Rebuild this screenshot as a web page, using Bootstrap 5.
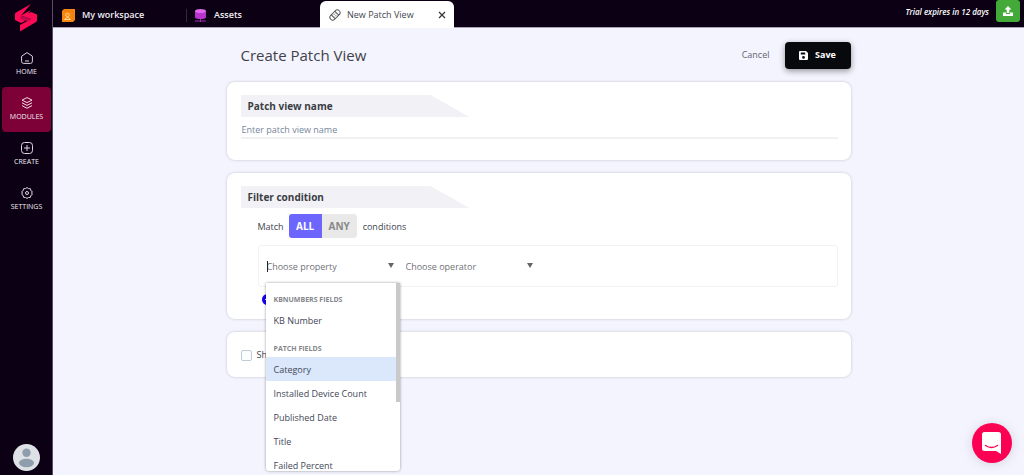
<!DOCTYPE html>
<html lang="en">
<head>
<meta charset="utf-8">
<meta name="viewport" content="width=device-width, initial-scale=1">
<title>Create Patch View</title>
<link href="https://cdn.jsdelivr.net/npm/bootstrap@5.3.0/dist/css/bootstrap.min.css" rel="stylesheet">
<style>
  body { font-family: "Open Sans", "Noto Sans", sans-serif; font-size: 9px; line-height: 16px; color: #41454e; background: #f4f4fe; }
  svg { display: block; flex: none; }
  .sidebar { width: 53px; background: #0b0014; border-right: 1px solid #564e62; }
  .sidebar .brand { height: 42px; padding-top: 4px; }
  .side-link { width: 49px; height: 45px; margin: 0 2px; border-radius: 4px; color: #f3eef4; font-size: 7px; font-weight: 400; line-height: 10px; gap: 3px; text-decoration: none; }
  .side-link.active { background: #7d0036; }
  .topbar { height: 28px; background: #0b0014; border-bottom: 1px solid #a9a3b8; color: #fff; }
  .tab-item { width: 133px; height: 28px; font-weight: 600; color: #f1eef3; text-decoration: none; gap: 7px; padding: 2px 8px 0 9px; }
  .tab-item + .tab-item::before { content: ""; width: 1px; height: 13px; background: #34283d; margin-left: -9px; }
  .tab-item.current { width: 134px; background: #fff; color: #44474f; font-weight: 400; border-radius: 6px 6px 0 0; margin: 1px 0 0 1px; height: 27px; gap: 6px; padding-top: 1px; }
  .tab-item.current::before { display: none; }
  .trial { font-size: 8px; font-style: italic; font-weight: 600; padding: 4px 7px 0 0; }
  .upload { width: 24px; height: 22px; background: #43a938; border: 0; border-radius: 3px; margin-right: 4px; }
  .page { max-width: 624px; width: 100%; }
  .page-head { height: 54px; padding-left: 14px; }
  .page-head h1 { font-size: 15px; line-height: 24px; font-weight: 400; color: #3f424a; }
  .btn-cancel { color: #62656e; border: 0; background: none; padding: 0 15px; }
  .btn-save { width: 66px; height: 27px; background: #08090d; color: #fff; font-weight: 700; border: 0; border-radius: 4px; box-shadow: 0 2px 6px #0006; gap: 7px; }
  .panel { background: #fff; border-radius: 8px; box-shadow: 0 0 3px #0003; padding: 13px 13px 14px 14px; margin-bottom: 13px; }
  .panel.name-panel { padding-bottom: 21px; }
  .ribbon { width: 229px; height: 22px; line-height: 22px; font-size: 10px; font-weight: 700; color: #3b3d44; background: #f2f1f6; padding-left: 7px; clip-path: polygon(0 0, 190px 0, 100% 100%, 0 100%); }
  .name-field { border: 0; border-bottom: 2px solid #f0f1f3; border-radius: 0; width: 100%; height: 22px; padding: 4px 1px 0; outline: 0; }
  .name-field::placeholder { color: #76869a; opacity: 1; }
  .inset { margin-left: 17px; }
  .match-row { padding-top: 6px; }
  .match-btn { height: 24px; border: 0; font-size: 10px; font-weight: 700; color: #888; background: #e9e9e9; border-radius: 0 3px 3px 0; width: 35px; padding: 0; }
  .match-btn.on { color: #fff; background: #6c66ff; border-radius: 3px 0 0 3px; width: 33px; margin-left: 5px; }
  .match-word { padding: 1px 0 0; }
  .match-btn + .match-word { margin-left: 6px; }
  .rule-row { height: 42px; border: 1px solid #f2f2f4; border-radius: 3px; padding: 0 8px; margin-top: 7px; gap: 12px; }
  .picker { width: 127px; }
  .picker input, .picker select { display: block; appearance: none; border: 0; outline: 0; width: 100%; height: 20px; padding: 1px 0 0; background: transparent; color: #6e7177; }
  .picker input::placeholder { color: #6e7177; opacity: 1; }
  .picker .arrow { position: absolute; right: 0; top: 7px; border: 3px solid transparent; border-top: 5px solid #62656b; border-bottom: 0; pointer-events: none; }
  .picker .caret-bar { position: absolute; left: 0; top: 5px; width: 1px; height: 11px; background: #222; }
  .add-btn { width: 11px; height: 11px; padding: 0; border: 0; background: none; margin: 7px 0 0 4px; }
  .option-menu { position: absolute; z-index: 5; left: -1px; top: 27px; width: 134px; height: 188px; overflow: hidden; background: #fff; border-radius: 0 0 3px 3px; box-shadow: 0 0 3px #0006; color: #3f4857; }
  .option-menu .thumb { position: absolute; right: 0; top: 0; width: 4px; height: 119px; background: #c9c9c9; }
  .option-menu ul { list-style: none; margin: 0; padding: 0; width: 130px; }
  .option-menu li { height: 24px; line-height: 25px; padding-left: 8px; white-space: nowrap; }
  .option-menu li.group { font-size: 7px; font-weight: 700; color: #85878c; height: 25px; line-height: 33px; }
  .option-menu li.hot { background: #dbe8fc; }
  .tick { width: 11px; height: 11px; margin: 0; border: 1px solid #bfcbd6; border-radius: 2px; appearance: none; background: #fbfdff; }
  .check-row { gap: 5px; padding-top: 2px; }
  .chat { position: fixed; right: 12px; bottom: 12px; width: 40px; height: 40px; border: 0; border-radius: 50%; background: #fc0053; padding: 0; box-shadow: 0 1px 12px #0002; }
</style>
</head>
<body>
<div class="d-flex min-vh-100">
  <nav class="sidebar d-flex flex-column flex-shrink-0" aria-label="Main">
    <a href="#" class="brand d-flex justify-content-center" aria-label="Home page">
      <svg width="24" height="28" viewBox="0 0 24 28"><path fill="#fc0a55" d="M17 0v6L7 11.500l10 3.500L6 21v6.500L22 18q1-.8 1-2v-5.500L17 8l-3 1.500 3-3.500V0L2 8.500Q1 9 1 10v6l6 3 4-2-4-5.500z"/><path fill="#c4084c" d="M7 11.500L17 15l-4 2.200-7-2.700z"/></svg>
    </a>
    <a href="#" class="side-link d-flex flex-column align-items-center justify-content-center">
      <svg width="12" height="12" viewBox="0 0 12 12" fill="none" stroke="#ddd5df"><path d="M.6 4.200L6 .6l5.400 3.600v5.200q0 2-2 2H2.600q-2 0-2-2zM4 9h4"/></svg>HOME</a>
    <a href="#" class="side-link active d-flex flex-column align-items-center justify-content-center">
      <svg width="12" height="12" viewBox="0 0 12 12" fill="none" stroke="#f1dbe6"><path d="M6 .6l5 2.500-5 2.500-5-2.500zM1 5.800l5 2.600 5-2.600M1 8.600l5 2.700 5-2.700"/></svg>MODULES</a>
    <a href="#" class="side-link d-flex flex-column align-items-center justify-content-center">
      <svg width="12" height="12" viewBox="0 0 12 12" fill="none" stroke="#ddd5df"><rect x=".5" y=".5" width="11" height="11" rx="3"/><path d="M6 3v6M3 6h6"/></svg>CREATE</a>
    <a href="#" class="side-link d-flex flex-column align-items-center justify-content-center">
      <svg width="12" height="12" viewBox="0 0 12 12" fill="none" stroke="#ddd5df"><path stroke-linejoin="round" d="M4.500 1.600L6 .6l1.500 1 1.900.1.400 1.900 1.500 1L10.700 6l.6 1.500-1.500 1-.4 1.900-1.900.1-1.500.9-1.500-.9-1.900-.1-.4-1.900-1.400-1L1.300 6 .7 4.600l1.500-1 .4-1.900z"/><circle cx="6" cy="6" r="1.500"/></svg>SETTINGS</a>
    <a href="#" class="mt-auto mx-auto mb-1" aria-label="Profile">
      <svg width="27" height="27" viewBox="0 0 27 27"><circle cx="13.500" cy="13.500" r="13.500" fill="#dee1e5"/><circle cx="13.500" cy="8.800" r="4.200" fill="#8f9dac"/><ellipse cx="13.500" cy="19" rx="7.500" ry="4.200" fill="#8f9dac"/></svg></a>
  </nav>

  <div class="flex-grow-1 d-flex flex-column">
    <header class="topbar d-flex">
      <a href="#" class="tab-item d-flex align-items-center">
        <svg width="13" height="13" viewBox="0 0 13 13"><path d="M2 0h11v11l-2 2H0V2z" fill="#f58610"/><path d="M2 2h9v9" fill="none" stroke="#e87408" stroke-width=".7"/><circle cx="5.500" cy="6" r="1.700" fill="none" stroke="#ffd08a"/><path d="M2.500 10.500q3-4 6 0z" fill="none" stroke="#ffd08a"/></svg>
        My workspace</a>
      <a href="#" class="tab-item d-flex align-items-center">
        <svg width="13" height="13" viewBox="0 0 13 13"><path d="M1 2v6q0 2 5.500 2T12 8V2z" fill="#b934cf"/><ellipse cx="6.500" cy="2" rx="5.500" ry="2" fill="#df67ea"/><path d="M1 12h11M6.500 10v3" stroke="#a32cb8"/></svg>
        Assets</a>
      <a href="#" class="tab-item current d-flex align-items-center">
        <svg width="12" height="12" viewBox="0 0 12 12" fill="none" stroke="#555"><g transform="rotate(-45 6 6)"><rect x="0" y="3.200" width="12" height="5.600" rx="2.800"/><path d="M3.500 3v6M8.500 3v6"/><path d="M5 5h2M5 7h2" stroke-width=".7"/></g></svg>
        New Patch View
        <svg class="ms-auto" width="8" height="8" viewBox="0 0 8 8" stroke="#333" stroke-width="1.200"><path d="M1 1l6 6M7 1L1 7"/></svg></a>
      <div class="ms-auto d-flex">
        <span class="trial">Trial expires in 12 days</span>
        <button type="button" class="upload d-flex align-items-center justify-content-center" aria-label="Upload"><svg width="10" height="10" viewBox="0 0 10 10" fill="#fff"><path d="M5 0l3.500 3.500H6.300V7H3.700V3.500H1.500zM0 6.500h3V8h4V6.500h3V10H0z"/></svg></button>
      </div>
    </header>

    <main class="page mx-auto">
      <div class="page-head d-flex align-items-center">
        <h1 class="mb-0 me-auto">Create Patch View</h1>
        <button type="button" class="btn-cancel">Cancel</button>
        <button type="button" class="btn-save d-flex align-items-center justify-content-center"><svg width="9" height="9" viewBox="0 0 9 9"><path fill="#fff" fill-rule="evenodd" d="M1 0h6l2 2v6q0 1-1 1H1Q0 9 0 8V1q0-1 1-1zm.8 1.500v2h4.400v-2zM4.500 5a1.400 1.400 0 100 2.800 1.400 1.400 0 000-2.800z"/></svg>Save</button>
      </div>

      <section class="panel name-panel">
        <label for="viewName" class="ribbon d-block">Patch view name</label>
        <input id="viewName" class="name-field d-block" type="text" placeholder="Enter patch view name">
      </section>

      <section class="panel">
        <div class="ribbon">Filter condition</div>
        <div class="inset">
          <div class="match-row d-flex align-items-center">
            <span class="match-word">Match</span>
            <button type="button" class="match-btn on" aria-pressed="true">ALL</button>
            <button type="button" class="match-btn" aria-pressed="false">ANY</button>
            <span class="match-word">conditions</span>
          </div>
          <div class="rule-row d-flex align-items-center">
            <div class="picker position-relative">
              <input type="text" role="combobox" aria-expanded="true" aria-controls="propertyList" aria-label="Property" placeholder="Choose property">
              <span class="caret-bar"></span><span class="arrow"></span>
              <div class="option-menu">
                <ul id="propertyList" role="listbox" aria-label="Properties">
                  <li class="group" role="presentation">KBNUMBERS FIELDS</li>
                  <li role="option">KB Number</li>
                  <li class="group" role="presentation">PATCH FIELDS</li>
                  <li class="hot" role="option" aria-selected="true">Category</li>
                  <li role="option">Installed Device Count</li>
                  <li role="option">Published Date</li>
                  <li role="option">Title</li>
                  <li role="option">Failed Percent</li>
                </ul>
                <span class="thumb"></span>
              </div>
            </div>
            <div class="picker position-relative">
              <select aria-label="Operator"><option>Choose operator</option></select>
              <span class="arrow"></span>
            </div>
          </div>
          <button type="button" class="add-btn d-block" aria-label="Add condition"><svg width="11" height="11" viewBox="0 0 11 11"><circle cx="5.500" cy="5.500" r="5.500" fill="#1600f5"/><path d="M5.500 3v5M3 5.500h5" stroke="#fff"/></svg></button>
        </div>
      </section>

      <section class="panel">
        <div class="check-row d-flex align-items-center">
          <input class="tick" type="checkbox" id="share"><label for="share">Share</label>
        </div>
      </section>
    </main>
  </div>
</div>
<button type="button" class="chat d-flex align-items-center justify-content-center" aria-label="Open chat"><svg width="20" height="22" viewBox="0 0 20 22"><path fill="#fff" d="M2.500 0h14Q19 0 19 2.500V22l-5-3H2.500Q0 19 0 16.500v-14Q0 0 2.500 0z"/><path d="M3.500 13.500q6 4 12 0" fill="none" stroke="#fc0053" stroke-width="1.500" stroke-linecap="round"/></svg></button>
<script src="https://cdn.jsdelivr.net/npm/bootstrap@5.3.0/dist/js/bootstrap.bundle.min.js"></script>
</body>
</html>
